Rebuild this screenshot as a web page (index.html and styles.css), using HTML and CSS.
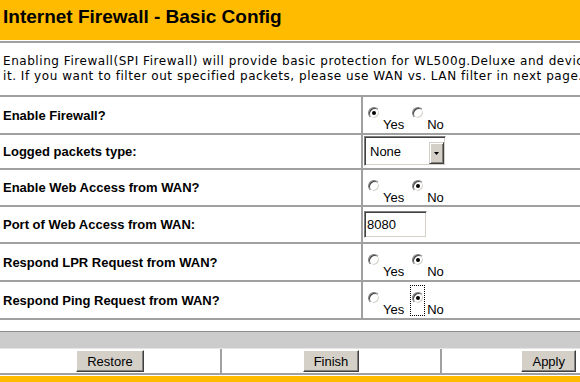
FILE: index.html
```html
<!DOCTYPE html>
<html lang="en">
<head>
<meta charset="UTF-8">
<title>Internet Firewall - Basic Config</title>
<link rel="stylesheet" href="styles.css">
</head>
<body>

<div class="page">

<div class="title-bar">
    <h1>Internet Firewall - Basic Config</h1>
</div>

<div class="intro">
    Enabling Firewall(SPI Firewall) will provide basic protection for WL500g.Deluxe and devices behind<br>
    it. If you want to filter out specified packets, please use WAN vs. LAN filter in next page.
</div>

<div class="config">
    <div class="row row-1">
        <div class="label">Enable Firewall?</div>
        <div class="value choices">
            <label class="opt"><span class="rb"><input type="radio" name="fw" checked></span><span class="txt">Yes</span></label>
            <label class="opt"><span class="rb"><input type="radio" name="fw"></span><span class="txt">No</span></label>
        </div>
    </div>

    <div class="row row-2">
        <div class="label">Logged packets type:</div>
        <div class="value">
            <div class="select">
                <span class="select-text">None</span>
                <span class="select-btn">
                    <svg width="5" height="3" viewBox="0 0 5 3"><path d="M0 0h5L2.5 3z" fill="#000"/></svg>
                </span>
            </div>
        </div>
    </div>

    <div class="row row-3">
        <div class="label">Enable Web Access from WAN?</div>
        <div class="value choices">
            <label class="opt"><span class="rb"><input type="radio" name="web"></span><span class="txt">Yes</span></label>
            <label class="opt"><span class="rb"><input type="radio" name="web" checked></span><span class="txt">No</span></label>
        </div>
    </div>

    <div class="row row-4">
        <div class="label">Port of Web Access from WAN:</div>
        <div class="value">
            <input type="text" class="text-field" value="8080">
        </div>
    </div>

    <div class="row row-5">
        <div class="label">Respond LPR Request from WAN?</div>
        <div class="value choices">
            <label class="opt"><span class="rb"><input type="radio" name="lpr"></span><span class="txt">Yes</span></label>
            <label class="opt"><span class="rb"><input type="radio" name="lpr" checked></span><span class="txt">No</span></label>
        </div>
    </div>

    <div class="row row-6">
        <div class="label">Respond Ping Request from WAN?</div>
        <div class="value choices">
            <label class="opt"><span class="rb"><input type="radio" name="ping"></span><span class="txt">Yes</span></label>
            <label class="opt"><span class="rb focused"><input type="radio" name="ping" checked></span><span class="txt">No</span></label>
        </div>
    </div>
</div>

<div class="gap"></div>
<div class="gray-bar"></div>

<div class="actions">
    <div class="cell center"><button>Restore</button></div>
    <div class="cell center"><button>Finish</button></div>
    <div class="cell right"><button>Apply</button></div>
</div>

<div class="footer-bar"></div>

</div>

</body>
</html>
```

FILE: styles.css
```css
body {
    margin: 0;
    background: #fff;
    overflow: hidden;
    font-family: "Liberation Sans", Arial, sans-serif;
    color: #000;
}

.page {
    width: 580px;
}

.title-bar {
    height: 40px;
    background: #ffbb00;
    margin-bottom: 1px;
}

.title-bar h1 {
    margin: 0;
    padding: 6px 0 0 3px;
    font-size: 19px;
    font-weight: bold;
    line-height: normal;
}

.intro {
    border-top: 2px solid #a0a0a0;
    border-bottom: 2px solid #a0a0a0;
    padding: 11px 0 11px 3px;
    font-family: "DejaVu Sans", Verdana, sans-serif;
    font-size: 12px;
    letter-spacing: 0.55px;
    line-height: 15px;
    white-space: nowrap;
    overflow: hidden;
}

/* form rows */
.row {
    display: grid;
    grid-template-columns: 361px 1fr;
    border-bottom: 2px solid #a0a0a0;
    box-sizing: border-box;
}

.row-1 { height: 38px; }
.row-2 { height: 35px; }
.row-3 { height: 37px; }
.row-4 { height: 37px; }
.row-5 { height: 38px; }
.row-6 { height: 38px; }

.label {
    align-self: center;
    padding-left: 3px;
    font-size: 13px;
    font-weight: bold;
    line-height: 15px;
}

.value {
    border-left: 2px solid #a0a0a0;
    padding-left: 1px;
    font-size: 13px;
    line-height: 15px;
}

.row-2 .value { padding-top: 1px; }
.row-4 .value { padding-top: 4px; }

.choices {
    display: flex;
    align-items: flex-start;
    padding-top: 4px;
    padding-left: 4px;
}

.opt {
    display: flex;
    align-items: stretch;
    margin-right: 7px;
}

.rb {
    display: flex;
    align-items: flex-start;
    width: 13px;
    height: 29px;
    padding-top: 6px;
    box-sizing: border-box;
    margin-right: 3px;
}

.txt {
    padding-top: 16px;
}

.rb input {
    appearance: none;
    -webkit-appearance: none;
    width: 12px;
    height: 12px;
    margin: 0 0 0 1px;
    border-radius: 50%;
    border: 1px solid;
    border-color: #808080 #ffffff #ffffff #808080;
    box-shadow: inset 1px 1px 0 #404040, inset -1px -1px 0 #d4d0c8;
    background: #fff;
    box-sizing: border-box;
    display: grid;
    place-items: center;
}

.rb input:checked::after {
    content: "";
    width: 4px;
    height: 4px;
    border-radius: 50%;
    background: #000;
}

.focused {
    outline: 1px dotted #000;
    outline-offset: 0;
}

/* dropdown */
.select {
    width: 82px;
    height: 30px;
    box-sizing: border-box;
    border: 1px solid;
    border-color: #808080 #ffffff #ffffff #808080;
    box-shadow: inset 1px 1px 0 #404040, inset -1px -1px 0 #d4d0c8;
    display: flex;
    align-items: flex-end;
    justify-content: space-between;
    padding: 0 1px 1px 5px;
    background: #fff;
}

.select-text {
    align-self: center;
    padding-top: 1px;
}

.select-btn {
    width: 15px;
    height: 22px;
    box-sizing: border-box;
    background: #d4d0c8;
    border: 1px solid;
    border-color: #d4d0c8 #404040 #404040 #d4d0c8;
    box-shadow: inset 1px 1px 0 #fff, inset -1px -1px 0 #808080;
    display: flex;
    align-items: center;
    justify-content: center;
}

.text-field {
    width: 63px;
    height: 27px;
    box-sizing: border-box;
    margin: 0;
    padding: 0 0 0 2px;
    border: 1px solid;
    border-color: #808080 #ffffff #ffffff #808080;
    box-shadow: inset 1px 1px 0 #404040, inset -1px -1px 0 #d4d0c8;
    font-family: "Liberation Sans", Arial, sans-serif;
    font-size: 13px;
    color: #000;
    outline: none;
}

/* bottom bars */
.gap {
    height: 11px;
}

.gray-bar {
    height: 16px;
    background: #cccccc;
    border-top: 1px solid #8c8c8c;
    border-bottom: 1px solid #e6e6e6;
}

.actions {
    display: grid;
    grid-template-columns: 220px 220px 1fr;
    height: 24px;
    border-bottom: 2px solid #a0a0a0;
}

.cell {
    display: flex;
    align-items: center;
}

.cell + .cell {
    border-left: 2px solid #a0a0a0;
}

.center { justify-content: center; }
.right { justify-content: flex-end; padding-right: 4px; }

button {
    height: 22px;
    padding: 0 10px;
    font-family: "Liberation Sans", Arial, sans-serif;
    font-size: 13px;
    color: #000;
    background: #d4d0c8;
    border: 1px solid;
    border-color: #ffffff #404040 #404040 #ffffff;
    box-shadow: inset -1px -1px 0 #808080;
    border-radius: 0;
}

.footer-bar {
    margin-top: 1px;
    height: 20px;
    background: #ffbb00;
}
```
